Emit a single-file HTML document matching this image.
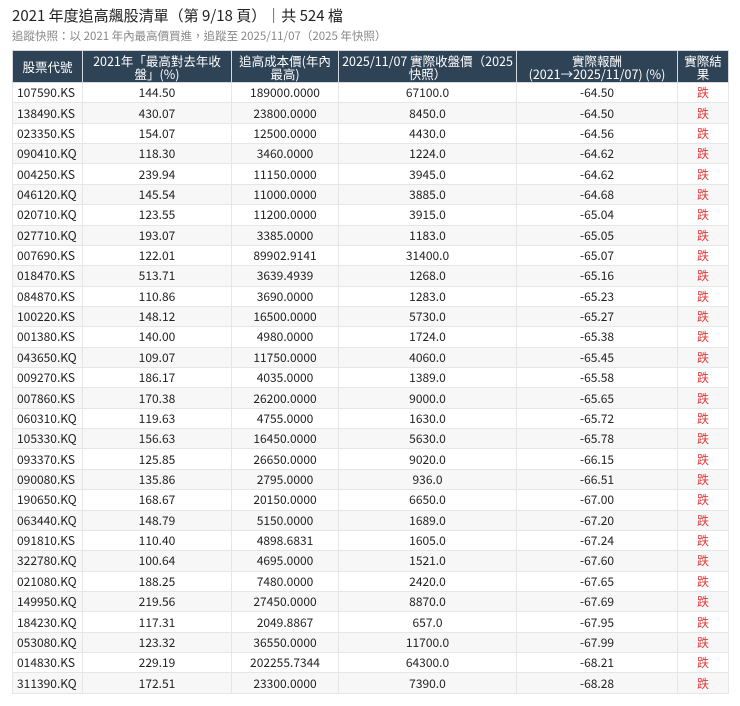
<!DOCTYPE html><html><head><meta charset="utf-8"><style>
body{margin:0;background:#fff;font-family:"Liberation Sans","Noto Sans CJK TC",sans-serif;color:#222}
h1{position:absolute;left:12px;top:6px;margin:0;font-size:15px;font-weight:normal;color:#222;font-family:"Noto Sans CJK TC",sans-serif;line-height:20px}
.sub{position:absolute;left:12px;top:28px;font-size:11.5px;color:#888;font-family:"Noto Sans CJK TC",sans-serif;line-height:16px}
table{position:absolute;left:12px;top:50px;border-collapse:collapse;width:716px;table-layout:fixed;font-family:"Noto Sans CJK TC",sans-serif;font-size:12px}
th{background:#2f4356;color:#fff;font-weight:normal;height:32px;line-height:13px;padding:0 3px;border:1px solid #d5d9dd;font-size:12.5px;box-sizing:border-box}
td{height:20.37px;box-sizing:border-box;padding:0 4px;border:1px solid #e4e6e8;text-align:center;line-height:13px}
td:first-child{text-align:left}
tr:nth-child(odd) td{background:#f7f7f7}
td.r{color:#e03a3a}
</style></head><body>
<h1>2021 年度追高飆股清單（第 9/18 頁）｜共 524 檔</h1>
<div class="sub">追蹤快照：以 2021 年內最高價買進，追蹤至 2025/11/07（2025 年快照）</div>
<table>
<colgroup><col style="width:70px"><col style="width:149px"><col style="width:107px"><col style="width:178px"><col style="width:161px"><col style="width:51px"></colgroup>
<tr><th>股票代號</th><th>2021年「最高對去年收<br>盤」(%)</th><th>追高成本價(年內<br>最高)</th><th>2025/11/07 實際收盤價（2025<br>快照）</th><th>實際報酬<br>(2021→2025/11/07) (%)</th><th>實際結<br>果</th></tr>
<tr><td>107590.KS</td><td>144.50</td><td>189000.0000</td><td>67100.0</td><td>-64.50</td><td class="r">跌</td></tr>
<tr><td>138490.KS</td><td>430.07</td><td>23800.0000</td><td>8450.0</td><td>-64.50</td><td class="r">跌</td></tr>
<tr><td>023350.KS</td><td>154.07</td><td>12500.0000</td><td>4430.0</td><td>-64.56</td><td class="r">跌</td></tr>
<tr><td>090410.KQ</td><td>118.30</td><td>3460.0000</td><td>1224.0</td><td>-64.62</td><td class="r">跌</td></tr>
<tr><td>004250.KS</td><td>239.94</td><td>11150.0000</td><td>3945.0</td><td>-64.62</td><td class="r">跌</td></tr>
<tr><td>046120.KQ</td><td>145.54</td><td>11000.0000</td><td>3885.0</td><td>-64.68</td><td class="r">跌</td></tr>
<tr><td>020710.KQ</td><td>123.55</td><td>11200.0000</td><td>3915.0</td><td>-65.04</td><td class="r">跌</td></tr>
<tr><td>027710.KQ</td><td>193.07</td><td>3385.0000</td><td>1183.0</td><td>-65.05</td><td class="r">跌</td></tr>
<tr><td>007690.KS</td><td>122.01</td><td>89902.9141</td><td>31400.0</td><td>-65.07</td><td class="r">跌</td></tr>
<tr><td>018470.KS</td><td>513.71</td><td>3639.4939</td><td>1268.0</td><td>-65.16</td><td class="r">跌</td></tr>
<tr><td>084870.KS</td><td>110.86</td><td>3690.0000</td><td>1283.0</td><td>-65.23</td><td class="r">跌</td></tr>
<tr><td>100220.KS</td><td>148.12</td><td>16500.0000</td><td>5730.0</td><td>-65.27</td><td class="r">跌</td></tr>
<tr><td>001380.KS</td><td>140.00</td><td>4980.0000</td><td>1724.0</td><td>-65.38</td><td class="r">跌</td></tr>
<tr><td>043650.KQ</td><td>109.07</td><td>11750.0000</td><td>4060.0</td><td>-65.45</td><td class="r">跌</td></tr>
<tr><td>009270.KS</td><td>186.17</td><td>4035.0000</td><td>1389.0</td><td>-65.58</td><td class="r">跌</td></tr>
<tr><td>007860.KS</td><td>170.38</td><td>26200.0000</td><td>9000.0</td><td>-65.65</td><td class="r">跌</td></tr>
<tr><td>060310.KQ</td><td>119.63</td><td>4755.0000</td><td>1630.0</td><td>-65.72</td><td class="r">跌</td></tr>
<tr><td>105330.KQ</td><td>156.63</td><td>16450.0000</td><td>5630.0</td><td>-65.78</td><td class="r">跌</td></tr>
<tr><td>093370.KS</td><td>125.85</td><td>26650.0000</td><td>9020.0</td><td>-66.15</td><td class="r">跌</td></tr>
<tr><td>090080.KS</td><td>135.86</td><td>2795.0000</td><td>936.0</td><td>-66.51</td><td class="r">跌</td></tr>
<tr><td>190650.KQ</td><td>168.67</td><td>20150.0000</td><td>6650.0</td><td>-67.00</td><td class="r">跌</td></tr>
<tr><td>063440.KQ</td><td>148.79</td><td>5150.0000</td><td>1689.0</td><td>-67.20</td><td class="r">跌</td></tr>
<tr><td>091810.KS</td><td>110.40</td><td>4898.6831</td><td>1605.0</td><td>-67.24</td><td class="r">跌</td></tr>
<tr><td>322780.KQ</td><td>100.64</td><td>4695.0000</td><td>1521.0</td><td>-67.60</td><td class="r">跌</td></tr>
<tr><td>021080.KQ</td><td>188.25</td><td>7480.0000</td><td>2420.0</td><td>-67.65</td><td class="r">跌</td></tr>
<tr><td>149950.KQ</td><td>219.56</td><td>27450.0000</td><td>8870.0</td><td>-67.69</td><td class="r">跌</td></tr>
<tr><td>184230.KQ</td><td>117.31</td><td>2049.8867</td><td>657.0</td><td>-67.95</td><td class="r">跌</td></tr>
<tr><td>053080.KQ</td><td>123.32</td><td>36550.0000</td><td>11700.0</td><td>-67.99</td><td class="r">跌</td></tr>
<tr><td>014830.KS</td><td>229.19</td><td>202255.7344</td><td>64300.0</td><td>-68.21</td><td class="r">跌</td></tr>
<tr><td>311390.KQ</td><td>172.51</td><td>23300.0000</td><td>7390.0</td><td>-68.28</td><td class="r">跌</td></tr>
</table>
</body></html>
